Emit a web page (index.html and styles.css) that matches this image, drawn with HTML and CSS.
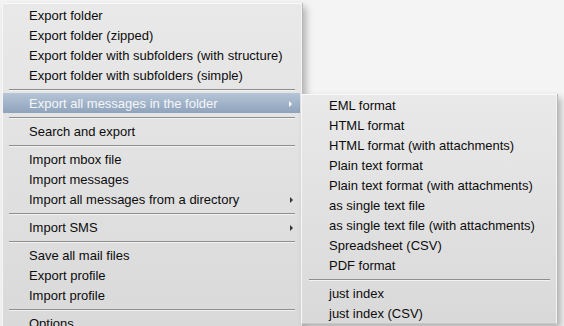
FILE: index.html
```html
<!DOCTYPE html>
<html>
<head>
<meta charset="utf-8">
<link rel="stylesheet" href="styles.css">
</head>
<body>
<div class="menu main">
  <div class="item">Export folder</div>
  <div class="item">Export folder (zipped)</div>
  <div class="item">Export folder with subfolders (with structure)</div>
  <div class="item">Export folder with subfolders (simple)</div>
  <div class="sep"></div>
  <div class="item sub active">Export all messages in the folder</div>
  <div class="sep"></div>
  <div class="item">Search and export</div>
  <div class="sep"></div>
  <div class="item">Import mbox file</div>
  <div class="item">Import messages</div>
  <div class="item sub">Import all messages from a directory</div>
  <div class="sep"></div>
  <div class="item sub">Import SMS</div>
  <div class="sep"></div>
  <div class="item">Save all mail files</div>
  <div class="item">Export profile</div>
  <div class="item">Import profile</div>
  <div class="sep"></div>
  <div class="item">Options</div>
</div>
<div class="menu submenu">
  <div class="item">EML format</div>
  <div class="item">HTML format</div>
  <div class="item">HTML format (with attachments)</div>
  <div class="item">Plain text format</div>
  <div class="item">Plain text format (with attachments)</div>
  <div class="item">as single text file</div>
  <div class="item">as single text file (with attachments)</div>
  <div class="item">Spreadsheet (CSV)</div>
  <div class="item">PDF format</div>
  <div class="sep"></div>
  <div class="item">just index</div>
  <div class="item">just index (CSV)</div>
</div>
</body>
</html>
```
FILE: styles.css
```css
html, body {
  margin: 0;
  padding: 0;
  background: #f4f4f4;
  overflow: hidden;
  height: 326px;
}
body {
  font-family: "Liberation Sans", Arial, sans-serif;
  font-size: 13px;
  color: #0c0c0c;
  padding: 3px 0 0 2px;
  box-sizing: border-box;
}
.menu {
  box-sizing: border-box;
  border-top: 1px solid #fafafa;
  border-left: 1px solid #f6f6f6;
  border-right: 1px solid #f4f4f4;
  border-bottom: 1px solid #c8c8c8;
  background: linear-gradient(#e9e9e9, #d9d9d9);
  box-shadow: 1px 0 0 #b8b8b8, 4px 4px 7px rgba(0, 0, 0, 0.28);
}
.main {
  width: 300px;
  padding-top: 1px;
}
.submenu {
  position: absolute;
  left: 301px;
  top: 94px;
  width: 256px;
  height: 230px;
}
.item {
  position: relative;
  height: 19px;
  padding-top: 1px;
  line-height: 20px;
  padding-left: 26px;
  white-space: nowrap;
}
.submenu .item {
  padding-left: 27px;
}
.item.active {
  background: linear-gradient(#b6c5d7, #8fa3bc);
  color: #f4f6f8;
  margin-right: 1px;
}
.item.sub::after {
  content: "";
  position: absolute;
  right: 8px;
  top: 8px;
  border-left: 3px solid #333;
  border-top: 3px solid transparent;
  border-bottom: 3px solid transparent;
}
.item.active::after {
  border-left-color: #fff;
}
.sep {
  height: 8px;
  display: flex;
  align-items: center;
  padding: 0 6px;
}
.sep::before {
  content: "";
  flex: 1;
  height: 1px;
  background: #8e8e8e;
  box-shadow: 0 1px 0 #f2f2f2;
}
.submenu .sep {
  padding: 0 6px 0 7px;
}
```
